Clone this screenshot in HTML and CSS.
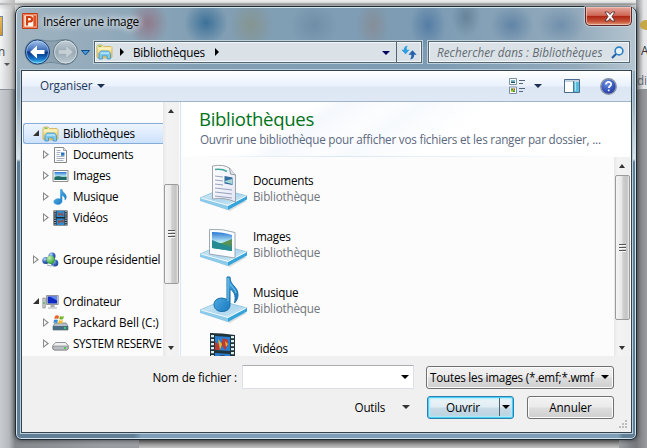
FILE: index.html
```html
<!DOCTYPE html>
<html lang="fr">
<head>
<meta charset="utf-8">
<title>Insérer une image</title>
<link rel="stylesheet" href="styles.css">
</head>
<body>
<svg class="defs" width="0" height="0" aria-hidden="true">
  <defs>
    <linearGradient id="gFolder" x1="0" y1="0" x2="0" y2="1"><stop offset="0" stop-color="#fff3b8"/><stop offset="1" stop-color="#e5c25b"/></linearGradient>
    <linearGradient id="gBlue" x1="0" y1="0" x2="1" y2="1"><stop offset="0" stop-color="#6cc5f5"/><stop offset="1" stop-color="#0869b4"/></linearGradient>
    <linearGradient id="gSky" x1="0" y1="0" x2="0" y2="1"><stop offset="0" stop-color="#2877d4"/><stop offset=".55" stop-color="#c1eef5"/><stop offset=".6" stop-color="#4d9553"/><stop offset="1" stop-color="#2387a6"/></linearGradient>
    <linearGradient id="gTray" x1="0" y1="0" x2="1" y2="1"><stop offset="0" stop-color="#d9edf7"/><stop offset=".55" stop-color="#afd7ed"/><stop offset="1" stop-color="#d9f1fb"/></linearGradient>
    <linearGradient id="gPaper" x1="0" y1="0" x2="1" y2="1"><stop offset="0" stop-color="#fff"/><stop offset="1" stop-color="#e2e6f4"/></linearGradient>
    <linearGradient id="gNav" x1="0" y1="0" x2="0" y2="1"><stop offset="0" stop-color="#a9c9ee"/><stop offset=".46" stop-color="#3566b5"/><stop offset=".5" stop-color="#07317f"/><stop offset=".8" stop-color="#1777cc"/><stop offset="1" stop-color="#52dbfb"/></linearGradient>
    <linearGradient id="gFwd" x1="0" y1="0" x2="0" y2="1"><stop offset="0" stop-color="#c4d0d8"/><stop offset=".5" stop-color="#98a8b3"/><stop offset="1" stop-color="#bfccd4"/></linearGradient>
    <radialGradient id="gHelp" cx=".4" cy=".3" r=".8"><stop offset="0" stop-color="#6c91e6"/><stop offset="1" stop-color="#12299a"/></radialGradient>
    <radialGradient id="gBall" cx=".35" cy=".3" r=".8"><stop offset="0" stop-color="#c3dcff"/><stop offset=".5" stop-color="#3564bd"/><stop offset="1" stop-color="#183985"/></radialGradient>
    <radialGradient id="gGreen" cx=".35" cy=".3" r=".8"><stop offset="0" stop-color="#c9f5b6"/><stop offset="1" stop-color="#158e24"/></radialGradient>
    <symbol id="library" viewBox="0 0 17 16">
      <path d="M1 2.500 2 1h4l1.500 1.500H15l1 1V13l-1 1H2l-1-1z" fill="url(#gFolder)" stroke="#cfaf54" stroke-width=".8"/>
      <path d="M2.500 2.200h3" stroke="#42ac38"/><path d="M2 5h13" stroke="#fffbd5"/>
      <path d="M3 15V9.500L5 7h7.500l2 2.500V15h-3.400v-3.200H6.500V15z" fill="#7cc8ee" stroke="#3f96c9" stroke-width=".8"/>
      <path d="M4.500 9h8.500" stroke="#d9f5ff"/>
    </symbol>
    <symbol id="doc" viewBox="0 0 16 16">
      <path d="M2 .5h9l3 3v12H2z" fill="#fff" stroke="#858585"/><path d="M11 .5v3h3" fill="#dde5ec" stroke="#888" stroke-width=".7"/>
      <path d="M4 3.500h4M4 5.500h4M4 7.500h3M4 9.500h8M4 11.500h8M4 13.500h7" stroke="#8f9aae" stroke-width=".8"/><path d="M8.500 5.500H12v3.200H8.500z" fill="#2776bd"/>
    </symbol>
    <symbol id="image" viewBox="0 0 16 16"><path d="M.5 2.500h15v11H.5z" fill="#fff" stroke="#8d8d8d"/><path d="M2 4h12v8H2z" fill="url(#gSky)"/><path d="M2 9.500c4-3 8 1 12-1V12H2z" fill="#206a67"/></symbol>
    <symbol id="music" viewBox="0 0 16 16"><path d="M8 .5h1.500c.4 3 4.200 4 4.300 7.200 0 1.300-.5 2.500-1.300 3.400C13 7.800 10 6.500 9.500 6.500v5.800c0 2-1.700 3.200-4.200 3.200-2 0-4-1-4-2.800 0-2.200 3.300-3.900 6.700-2.600z" fill="url(#gBlue)" stroke="#278bd2" stroke-width=".5"/></symbol>
    <symbol id="film" viewBox="0 0 16 16"><path d="M1 .5h14v15H1z" fill="#1c2630"/><path d="M4 1h8v6H4zM4 8.500h8V15H4z" fill="#2c8fd5"/><path d="m5 2 3 2 2-2 1 4-3-1-2 1zm0 8 3 1 3-2v4l-3-1-2 2z" fill="#984c42"/><path d="M2.500 1v14M13.500 1v14" stroke="#e2eeee" stroke-width="1.200" stroke-dasharray="1.200 1"/></symbol>
    <symbol id="group" viewBox="0 0 17 16"><circle cx="10" cy="4" r="3.500" fill="url(#gBall)"/><circle cx="3.800" cy="8.500" r="3.500" fill="url(#gBall)"/><circle cx="12.700" cy="11" r="3.600" fill="url(#gBall)"/><circle cx="8.700" cy="7.700" r="4.300" fill="url(#gGreen)"/><path d="M5 13q4 2 7 0" stroke="#91a7cf" fill="none"/></symbol>
    <symbol id="computer" viewBox="0 0 17 16"><path d="M.8 4h2.500v10H.8z" fill="#c9cec9" stroke="#797d7d" stroke-width=".6"/><path d="M2 8v2" stroke="#39b631"/><path d="M4.500 1.500h11.700v9H4.500z" fill="#c9ccd0" stroke="#92969b"/><path d="M5.700 2.500h9.300v7H5.700z" fill="#102bc4"/><path d="M8 2.500h7v4z" fill="#668aee"/><path d="M9 11h3l1 2H8zM6 13.500h9v1H6z" fill="#a7abae"/></symbol>
    <symbol id="windisk" viewBox="0 0 17 16"><path d="m3 8-2 3v4h15v-4l-2-3z" fill="#b6bfc5" stroke="#66727c" stroke-width=".7"/><path d="M1 11h15v4H1z" fill="#496d81"/><path d="M13 12v2" stroke="#42f15d" stroke-width="1.400"/><path d="M3 1q2-1.300 4 0L6.300 4Q4 3 2.300 4z" fill="#e8622b"/><path d="M8 1q2 1 4 0l-.8 3q-2 1-4 0z" fill="#77b529"/><path d="M2 5q2-1 4 0l-.8 3Q3 7 1.300 8z" fill="#398cda"/><path d="M7 5q2 1 4 0l-.8 3q-2 1-4 0z" fill="#f5bd25"/></symbol>
    <symbol id="disk" viewBox="0 0 17 16"><path d="m3.500 6.500-2.700 3v3.500l1 1h13.400l1-1V9.500l-2.700-3z" fill="#eef0f1" stroke="#777c80" stroke-width=".8"/><path d="M1 10h15v3l-1 1H2l-1-1z" fill="#b9bec4" stroke="#777" stroke-width=".6"/><path d="M13 11v2" stroke="#24d028" stroke-width="1.400"/></symbol>
    <symbol id="tray" viewBox="0 0 48 48"><path d="m2 37 28 10 17-10" fill="#b6bdc1" opacity=".45"/><path d="m0 34 21-9 26 7-19 10z" fill="url(#gTray)" stroke="#78b9dc" stroke-width=".7"/><path d="m0 34 28 8v4L0 37z" fill="#8dcaea"/><path d="m28 42 19-10v3.500L28 46z" fill="#35a4db"/><path d="m1 34 27 7.500L46 32" stroke="#f0fbff" fill="none"/></symbol>
    <symbol id="bigdoc" viewBox="0 0 48 48"><use href="#tray" width="48" height="48"/><path d="M12.500 2q11-2 17 2l6 7v27q-11-5-23-3z" fill="url(#gPaper)" stroke="#949ba2" stroke-width=".9"/><path d="m29.500 4 1 6 5 1" fill="#dfe6ed" stroke="#7d868e" stroke-width=".8"/><path d="M15 5.500q7-1 12 2" stroke="#45a59e" stroke-width="1.500" fill="none"/><path d="m15 12 8 1m-8 3 8 1m-8 3 8 1m-8 3 17 2m-17 2 17 2m-17 2 17 2" stroke="#8d97b4" stroke-width=".9"/><path d="m24.500 12 8 1.500v7.500l-8-1.500z" fill="#326b9d"/><path d="m25 17 7-2v5l-7-2z" fill="#a5d8d7"/></symbol>
    <symbol id="bigimage" viewBox="0 0 48 48"><use href="#tray" width="48" height="48"/><path d="M9.500 9.500q13-1 25.500 3v25.500l-25.500-4z" fill="#fbfcff" stroke="#92a0aa" stroke-width=".9"/><path d="M12 12q11 0 20 3v16l-20-3z" fill="url(#gSky)"/><path d="m12 20 20 8v3l-20-3z" fill="#268b92"/><path d="m22 23 10-4v6z" fill="#5b9154"/></symbol>
    <symbol id="bigmusic" viewBox="0 0 48 48"><use href="#tray" width="48" height="48"/><path d="M27 1h3c0 9 8 9 8 18 0 3-1.500 6-3.500 8 2-8-1-12-4.500-14v16c0 4-3 6.500-8 6.500-5 0-8-3-8-7 0-5 6-8.500 13-5z" fill="url(#gBlue)" stroke="#1870a9"/><path d="M28 2v23m2-17c2 3 5 5 6 9" stroke="#82d1f4" stroke-width=".9" fill="none"/></symbol>
    <symbol id="bigfilm" viewBox="0 0 48 48"><path d="M10 1q12 0 25 2v45H10z" fill="#20333b"/><path d="m15 4 15 1v14l-15-1zM15 21l15 1v20H15z" fill="#287ed0"/><path d="m15 9 5 5v4h-5zm8-3 5 2v5l-3 5-4-6z" fill="#b93b37"/><path d="m18 7 4 5-2 6zM25 9l3 3-2 3z" fill="#efb42c"/><path d="M17 25q6-4 11 1v6q-5 3-9-1z" fill="#362d38"/><path d="M12.500 3v43M32.500 4v43" stroke="#d9eeee" stroke-width="3" stroke-dasharray="2.200 1.800"/></symbol>
  </defs>
</svg>

<div class="ribbon">
  <div class="ribbon-left"><i class="thumb"></i><b>n</b><i class="caret dim"></i></div>
  <div class="ribbon-right"><i class="dot"></i><span>A</span><em>di</em></div>
</div>
<div class="slide"></div>

<main class="window">
  <header class="titlebar">
    <svg class="app" viewBox="0 0 16 16"><path d="M.5.500h15v15H.5z" fill="#eb9271" stroke="#c23d14"/><path d="M2 2h9.500v12H2z" fill="#fff8f1" stroke="#e9561c" stroke-width=".6"/><path d="M12 3h2v10h-2z" fill="#d85226"/><path d="M5 12.500V4h2.500c3.500 0 3.500 4.500 0 4.500H5" fill="none" stroke="#cd3e10" stroke-width="2.200"/></svg>
    <h1>Insérer une image</h1>
    <button class="close" aria-label="Fermer"><svg width="12" height="11" viewBox="0 0 12 11"><path d="m1 1h3l2 2.500L8 1h3L8 5.500 11 10H8L6 7.500 4 10H1l3-4.500z" fill="#fff" stroke="#5b3131" stroke-width=".9"/></svg></button>
  </header>

  <nav class="navrow">
    <svg class="travel" width="66" height="28" viewBox="0 0 66 28">
      <path d="M13 1.500c5 0 7 1.500 14 1.500s9-1.500 14-1.500c16 0 16 25 0 25-5 0-7-2-14-2s-9 2-14 2c-16 0-16-25 0-25z" fill="#8299aa" fill-opacity=".6" stroke="#738896"/>
      <circle cx="13.500" cy="14" r="12" fill="url(#gNav)" stroke="#183e73"/><circle cx="13.500" cy="14" r="11" fill="none" stroke="#b5d9f4" stroke-opacity=".6"/>
      <path d="m6 14 7-6.500v4.500h7.500v4H13v4.500z" fill="#fff"/>
      <circle cx="41.500" cy="14" r="12" fill="url(#gFwd)" stroke="#617581"/><circle cx="41.500" cy="14" r="11" fill="none" stroke="#dce5e9" stroke-opacity=".8"/>
      <path d="m49 14-7-6v4h-7.500v4H42v4z" fill="#c6d0d6" stroke="#a5b2ba" stroke-width=".5"/>
      <path d="M57.500 12.500h8l-4 4.500z" fill="#3e9adb" stroke="#174b83"/>
    </svg>
    <div class="address">
      <svg width="17" height="16"><use href="#library"/></svg>
      <i class="tri"></i><span>Bibliothèques</span><i class="tri last"></i>
      <i class="caret navy"></i>
      <div class="refresh"><svg width="16" height="15" viewBox="0 0 14 13"><path d="M6 .5C3.500.5 2.500 2 2.500 4H.3L4 8l3.500-4H5c0-1.500 0-2.500 1-3.500z" fill="#2d9ee0"/><path d="M8 12.500c2.500 0 3.500-2 3.500-4h2.200L10 4.500l-3.500 4H9c0 1.500 0 3-1 4z" fill="#2562ac"/></svg></div>
    </div>
    <div class="search"><span>Rechercher dans : Bibliothèques</span><svg width="13" height="13" viewBox="0 0 13 13"><circle cx="8" cy="5" r="3.900" fill="#e7f3fb" stroke="#2e80c5" stroke-width="1.600"/><path d="m5 8-4 4" stroke="#2461a6" stroke-width="2.200"/></svg></div>
  </nav>

  <div class="client">
    <div class="toolbar">
      <span class="organise">Organiser</span><i class="caret"></i>
      <svg class="views" width="16" height="16" viewBox="0 0 16 16"><path d="M.5.500h7v6h-7zM.5 9h7v6.500h-7z" fill="#fff" stroke="#7b8fa5"/><path d="M2 2h4v1.500H2z" fill="#76bdd8"/><path d="M2 3.500h4V5H2z" fill="#195a62"/><path d="M2 10.500h4V14H2z" fill="#e3cd38"/><path d="M2 10.500h2v2H2zM4 12.500h2V14H4z" fill="#2b9942"/><path d="M4 10.500h2v2z" fill="#cb3a2c"/><path d="M10 2.500h6M10 5.500h4M10 10.500h6M10 13.500h4" stroke="#52657c"/></svg>
      <i class="caret"></i>
      <svg class="pane" width="16" height="14" viewBox="0 0 16 14"><path d="M.5.500h15v13H.5z" fill="#fff" stroke="#496b8d"/><path d="M1 1h14v2H1z" fill="#c6d4e1"/><path d="M10 3h5v10h-5z" fill="#5cbcdb"/><path d="M9.500 2v11" stroke="#467e9e"/><path d="M11.500 3v9" stroke="#abe2f1"/></svg>
      <svg class="help" width="17" height="17" viewBox="0 0 17 17"><circle cx="8.500" cy="8.500" r="7.700" fill="url(#gHelp)" stroke="#8993a8" stroke-width="1.500"/><path d="M5.900 6.500c0-3.500 5.500-3.200 5.300-.2-.1 1.700-2.300 1.700-2.400 3.700M8.700 11.500v1.800" stroke="#fff" stroke-width="1.700" fill="none"/></svg>
    </div>

    <div class="body">
      <div class="tree">
        <div class="node root selected"><i class="open"></i><svg><use href="#library"/></svg><span>Bibliothèques</span></div>
        <div class="node"><i class="shut"></i><svg><use href="#doc"/></svg><span>Documents</span></div>
        <div class="node"><i class="shut"></i><svg><use href="#image"/></svg><span>Images</span></div>
        <div class="node"><i class="shut"></i><svg><use href="#music"/></svg><span>Musique</span></div>
        <div class="node"><i class="shut"></i><svg><use href="#film"/></svg><span>Vidéos</span></div>
        <div class="node root spaced"><i class="shut"></i><svg><use href="#group"/></svg><span>Groupe résidentiel</span></div>
        <div class="node root spaced"><i class="open"></i><svg><use href="#computer"/></svg><span>Ordinateur</span></div>
        <div class="node"><i class="shut"></i><svg><use href="#windisk"/></svg><span class="drive">Packard Bell (C:)</span></div>
        <div class="node"><i class="shut"></i><svg><use href="#disk"/></svg><span class="caps">SYSTEM RESERVE</span></div>
      </div>
      <div class="scroll tree-scroll"><i class="up"></i><div class="thumbbar"><i class="grip"></i></div><i class="down"></i></div>
      <section class="files">
        <div class="heading"><h2>Bibliothèques</h2><p>Ouvrir une bibliothèque pour afficher vos fichiers et les ranger par dossier, ...</p></div>
        <div class="listing">
          <div class="items">
            <div class="item"><svg><use href="#bigdoc"/></svg><div><strong>Documents</strong><small>Bibliothèque</small></div></div>
            <div class="item"><svg><use href="#bigimage"/></svg><div><strong>Images</strong><small>Bibliothèque</small></div></div>
            <div class="item"><svg><use href="#bigmusic"/></svg><div><strong>Musique</strong><small>Bibliothèque</small></div></div>
            <div class="item last"><svg><use href="#bigfilm"/></svg><div><strong>Vidéos</strong></div></div>
          </div>
          <div class="scroll list-scroll"><i class="up"></i><div class="thumbbar"><i class="grip"></i></div><i class="down"></i></div>
        </div>
      </section>
    </div>

    <footer>
      <div class="line">
        <label>Nom de fichier :</label>
        <div class="field"><i class="caret black"></i></div>
        <div class="btn filter"><span>Toutes les images (*.emf;*.wmf</span><i class="caret black"></i></div>
      </div>
      <div class="line actions">
        <span class="tools">Outils</span><i class="caret tools-caret"></i>
        <div class="btn primary"><span>Ouvrir</span><i class="sep"></i><i class="caret black"></i></div>
        <div class="btn cancel">Annuler</div>
      </div>
      <svg class="grip-corner" width="10" height="10" viewBox="0 0 10 10"><path d="M7 0h2v2H7zM7 3h2v2H7zM7 6h2v2H7zM4 3h2v2H4zM4 6h2v2H4zM1 6h2v2H1z" fill="#bdbdbd"/></svg>
    </footer>
  </div>
</main>
</body>
</html>
```

FILE: styles.css
```css
* { box-sizing: border-box; }
body {
  margin: 0; width: 647px; height: 448px; overflow: hidden; position: relative;
  font: 11.7px/15px "Open Sans", "Noto Sans", sans-serif; letter-spacing: -.24px; color: #000;
  background: linear-gradient(90deg, #c9cccf 0, #b5b9bd 9px, #85898d 15px, #999da2 100px, #999da2 619px, #77797c 636px, #999b9e 647px);
}
.defs { position: absolute; }
h1, h2, p { margin: 0; font-weight: 400; }
button { padding: 0; font: inherit; }
span, small, strong, label, p, h1, h2 { white-space: nowrap; }
i { display: block; flex: none; }
svg { flex: none; }

.ribbon { position: absolute; inset: 0 0 auto; height: 90px; background: linear-gradient(#eee 0, #e2e3e4 3px, #929597 4px, #dedfe0 5px, #f8f9fa 10px, #eef0f2 100%); border-bottom: 1px solid #8b9096; display: flex; justify-content: space-between; }
.ribbon-left { width: 15px; padding-top: 16px; background: linear-gradient(90deg, transparent, #bbb); }
.thumb { width: 3px; height: 20px; background: linear-gradient(#eabc58, #d29632); border: solid #76889c; border-width: 1px 1px 1px 0; }
.ribbon-left b { display: block; font-weight: 400; margin: 8px 0 4px -2px; color: #444; }
.caret { width: 0; height: 0; border: solid transparent; border-width: 4px 4px 0; border-top-color: #1d2f50; }
.caret.dim { margin-left: 4px; border-width: 3px 3px 0; border-top-color: #555; }
.caret.navy { border-top-color: #00005e; }
.caret.black { border-top-color: #000; }
.ribbon-right { width: 11px; padding: 20px 0 0 4px; background: linear-gradient(90deg, #8d9093, #e4e6e8 8px); line-height: 15px; overflow: hidden; }
.dot { width: 12px; height: 10px; border-radius: 50%; background: #c7a849; margin-bottom: 13px; }
.ribbon-right span { display: block; margin-left: 1px; color: #333; }
.ribbon-right em { display: block; margin: 15px 0 0 -3px; font-style: normal; color: #666; }
.slide { position: absolute; left: 139px; top: 436px; width: 480px; height: 12px; background: linear-gradient(#777 5px, #c4c4c4 12px); }

.window {
  position: absolute; left: 15px; top: 6px; width: 622px; height: 434px; padding: 0 5px;
  border: 1px solid #1f2a33; border-radius: 8px 8px 6px 6px; box-shadow: inset 0 0 0 1px #d3e2eb, 0 0 5px rgba(0,0,0,.65);
  display: flex; flex-direction: column;
  background:
    radial-gradient(ellipse 20px 24px at 132px 16px, #94505f80, transparent) no-repeat,
    radial-gradient(circle 22px at 190px 16px, #1e5c8cb0, transparent) no-repeat,
    radial-gradient(ellipse 22px 26px at 235px 18px, #8a8a6c80, transparent) no-repeat,
    radial-gradient(ellipse 24px 22px at 298px 18px, #5c7b9670, transparent) no-repeat,
    radial-gradient(ellipse 17px 26px at 357px 18px, #8f7a7470, transparent) no-repeat,
    radial-gradient(ellipse 18px 24px at 412px 18px, #2c5f9580, transparent) no-repeat,
    radial-gradient(ellipse 15px 20px at 450px 10px, #4a688080, transparent) no-repeat,
    radial-gradient(ellipse 22px 20px at 496px 18px, #3a659480, transparent) no-repeat,
    radial-gradient(ellipse 24px 20px at 545px 18px, #52779f80, transparent) no-repeat,
    linear-gradient(90deg, #627f98 0, #627f98 118px, #7f9fb8 126px, #7f9fb8 602px, #627f98 607px) bottom / 100% 8px no-repeat,
    linear-gradient(90deg, #a1b4c1, #829fb4 180px, #7d9cb4 420px, #93aabb 560px, #b5c5d0) top / 100% 64px no-repeat,
    linear-gradient(#9bb0bf 0, #91a9ba 90px, #dae3e8 152px, #5e7e98 155px);
}
.titlebar { display: flex; height: 31px; align-items: flex-start; }
.app { width: 16px; height: 16px; margin: 6px 5px 0 1px; }
.titlebar h1 { font-size: 11.8px; letter-spacing: -.22px; line-height: 16px; padding-top: 6px; text-shadow: 0 0 6px #fff, 0 0 9px #fff; }
.close { margin: 0 -1px 0 auto; width: 47px; height: 19px; border: 1px solid #592a29; border-top: 0; border-radius: 0 0 5px 5px; background: linear-gradient(#e5aaa0, #ce6654 47%, #ac2411 50%, #c65339 80%, #e39c77); box-shadow: inset 0 0 0 1px #f0c4bacc, 0 0 1px 1px #d9e4e999; display: grid; place-items: center; padding-left: 2px; }

.navrow { display: flex; height: 32px; align-items: flex-start; }
.travel { margin: 0 4px 0 3px; }
.address, .search { height: 22px; margin-top: 3px; background: #dae2e8; border: 1px solid #536773; box-shadow: 0 0 0 1px #bfd0db, inset 0 0 0 1px #f3f7f9; display: flex; align-items: center; }
.address { width: 328px; margin-right: 6px; padding-left: 1px; }
.tri { width: 0; height: 0; border: solid transparent; border-width: 4px 0 4px 4px; border-left-color: #000; margin: 0 9px 0 7px; }
.tri.last { margin-left: 10px; }
.address .caret { margin: 1px 6px 0 auto; }
.refresh { width: 25px; height: 20px; border-left: 1px solid #536773; display: grid; place-items: center; }
.search { width: 202px; padding: 0 5px 0 8px; justify-content: space-between; color: #646b70; font-style: italic; letter-spacing: .03px; }

.client { width: 611px; height: 363px; border: 1px solid #35434e; box-shadow: 0 0 0 1px #b9cddb; background: #f0f0f0; }
.toolbar { height: 31px; display: flex; align-items: center; padding: 0 14px 0 18px; color: #1e395b; background: linear-gradient(#fff, #e9f1fb 15px, #dce6f4 16px, #dfe9f5 28px); border-bottom: 1px solid #a2b2c8; }
.toolbar span { margin-top: -1px; }
.organise { margin-right: 5px; letter-spacing: -.15px; }
.views { margin: 0 9px 0 auto; }
.pane { margin: 0 20px 0 22px; }
.body { height: 254px; display: flex; background: #fcfcfc; overflow: hidden; }
.tree { width: 141px; padding: 21px 0 0 1px; overflow: hidden; }
.node { height: 21px; padding-left: 20px; display: flex; align-items: center; overflow: hidden; }
.node.root { padding-left: 10px; }
.node.spaced { margin-top: 21px; }
.node svg { width: 17px; height: 16px; margin-right: 4px; }
.node.selected { border: 1px solid #84acdd; border-right: 0; border-radius: 3px 0 0 3px; padding-left: 9px; background: linear-gradient(#eef5ff, #cde1fc); }
.node i { width: 9px; height: 9px; }
.node .shut { background: #8a8a8a; clip-path: polygon(0 0, 0 100%, 6px 50%, 0 0, 1px 2px, 4px 50%, 1px 7px, 1px 2px); }
.node .open { background: #303030; clip-path: polygon(6px 1px, 6px 7px, 0 7px); }
.node .drive { letter-spacing: -.08px; }
.node .caps { letter-spacing: -.32px; }

.scroll { background: linear-gradient(90deg, #e8e8e8, #f3f3f3 4px, #f0f0f0); display: flex; flex-direction: column; align-items: center; }
.up, .down { width: 0; height: 0; border: solid transparent; }
.up { border-width: 0 3.5px 4px; border-bottom-color: #333; }
.down { border-width: 4px 3.5px 0; border-top-color: #333; margin-top: auto; margin-bottom: 6px; }
.thumbbar { width: 15px; border: 1px solid #9b9b9b; border-radius: 2px; background: linear-gradient(90deg, #f5f5f5, #e7e7e7 45%, #d0d0d0 52%, #c3c3c3 85%, #eee); display: grid; place-items: center; }
.grip { width: 7px; height: 8px; background: repeating-linear-gradient(#555 0 1px, #f8f8f8 1px 2px, transparent 2px 3px); }
.tree-scroll { width: 16px; padding-top: 7px; }
.tree-scroll .thumbbar { height: 100px; margin-top: 71px; }
.files { flex: 1; margin-left: 1px; border-left: 1px solid #d5e6f7; min-width: 0; }
.heading { height: 55px; padding: 4px 0 0 18px; background: linear-gradient(90deg, transparent, #d9e8f5 35%, transparent) 0 100% / 100% 1px no-repeat, linear-gradient(145deg, #fff 26%, #f5f8fc 31%, #fcfdff 40%, #f7fafd 46%, #fff 60%); }
h2 { font-size: 18.6px; letter-spacing: -.33px; line-height: 27px; margin-top: -1px; color: #00731a; }
.heading p { color: #5c687e; line-height: 15px; padding-left: 1px; letter-spacing: -.22px; }
.listing { display: flex; height: 199px; }
.items { flex: 1; padding: 3px 0 0 19px; overflow: hidden; }
.item { display: flex; height: 56px; align-items: center; }
.item > svg { width: 48px; height: 48px; margin-right: 5px; }
.item > div { margin-top: -1px; }
.item.last { align-items: flex-start; padding-top: 4px; }
.item.last > div { padding-top: 9px; }
.item strong, .item small { display: block; font-size: inherit; line-height: 16px; font-weight: 400; }
.item small { color: #70747b; letter-spacing: -.18px; }
.list-scroll { width: 16px; margin-right: 1px; padding-top: 7px; }
.list-scroll .thumbbar { height: 145px; margin-top: 7px; }

footer { height: 76px; padding: 9px 17px 0 0; position: relative; }
.line { display: flex; height: 24px; align-items: center; justify-content: flex-end; }
label { margin-right: 5px; letter-spacing: -.12px; }
.field { width: 172px; height: 24px; background: #fff; border: 1px solid #dde1e7; border-top-color: #abadb3; display: flex; align-items: center; justify-content: flex-end; padding-right: 4px; margin-right: 12px; }
.btn { height: 23px; border: 1px solid #707070; border-radius: 3px; box-shadow: inset 0 0 0 1px #fbfbfb; background: linear-gradient(#f2f2f2, #ebebeb 48%, #dddddd 52%, #cfcfcf); display: flex; align-items: center; }
.filter { width: 188px; padding: 0 4px 0 3px; justify-content: space-between; }
.filter span { letter-spacing: -.23px; }
.actions { margin-top: 6px; }
.tools { margin-right: 17px; }
.tools-caret { margin-right: 17px; border-top-color: #333; }
.primary { width: 87px; margin-right: 13px; padding-left: 18px; border-color: #2c7fae; box-shadow: inset 0 0 0 1px #48d2f8, inset 0 0 2px 2px #b2e9fb; background: linear-gradient(#eef5f8, #e0edf3 48%, #c8dce7 52%, #b9d0dd); }
.primary span { width: 34px; letter-spacing: -.1px; }
.sep { width: 1px; height: 18px; background: #53636d; margin: 0 2px 0 19px; }
.cancel { width: 87px; justify-content: center; letter-spacing: -.1px; }
.grip-corner { position: absolute; right: 3px; bottom: 2px; }
```
